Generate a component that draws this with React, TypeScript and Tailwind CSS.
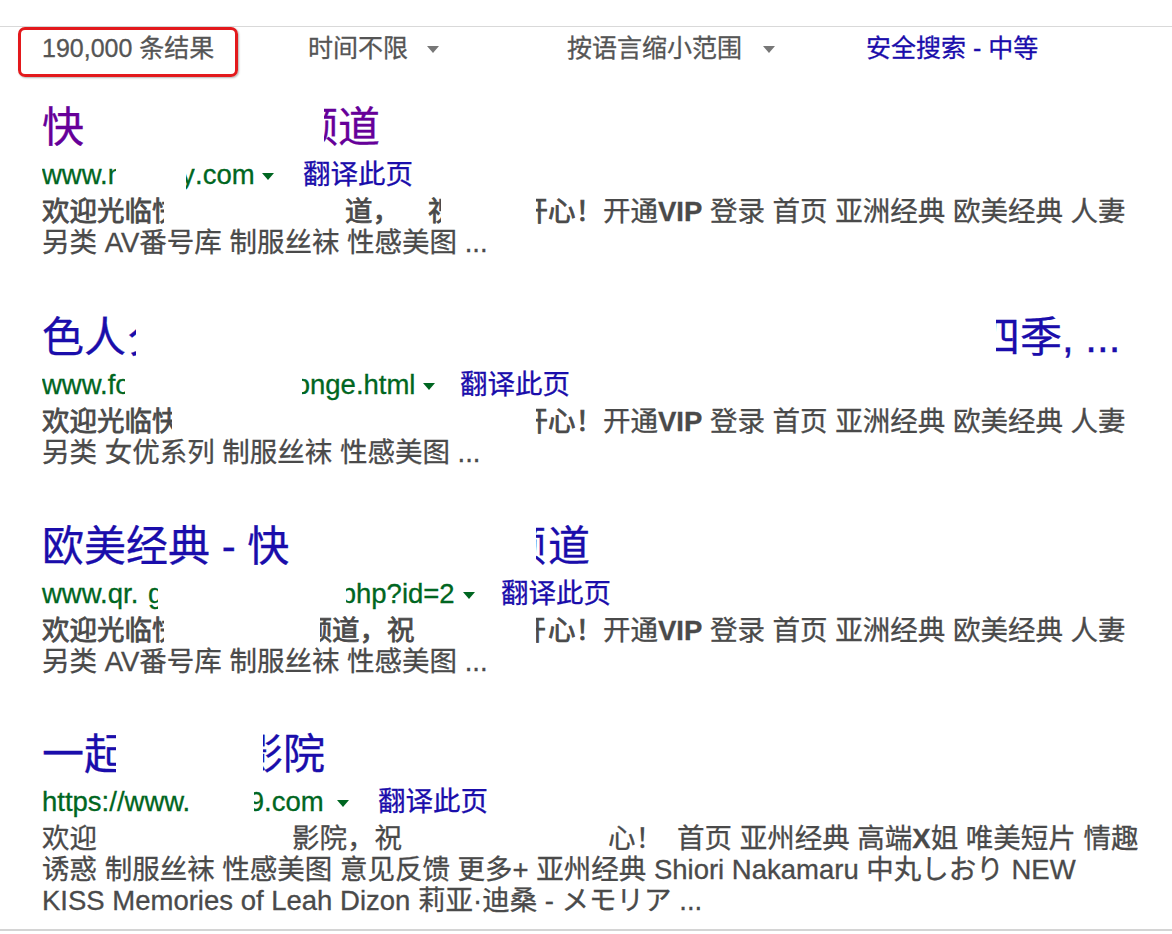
import React from "react";

type Part = {
  x: number;
  t: React.ReactNode;
  cw?: number; // visible width when only part of the glyphs survives the redaction
  shift?: number; // how far the clipped text is pulled left
  b?: boolean;
  c?: string;
};

function Tri({ color = "border-t-[#006621]" }: { color?: string }) {
  return (
    <div className="flex h-full items-center pt-[3px]">
      <div className={`h-0 w-0 border-x-[6px] border-t-[7px] border-x-transparent ${color}`} />
    </div>
  );
}

function Line({ parts, className }: { parts: Part[]; className: string }) {
  return (
    <div className={`flex whitespace-nowrap ${className}`}>
      <div className="shrink-0" style={{ width: parts[0].x }} />
      {parts.map((p, i) => {
        const next = parts[i + 1];
        const slot = next ? next.x - p.x : undefined;
        return (
          <div
            key={i}
            className={`h-full shrink-0 ${p.b ? "[-webkit-text-stroke:0.8px]" : ""} ${p.c ?? ""}`}
            style={slot ? { width: slot } : undefined}
          >
            {p.cw !== undefined ? (
              <div className="overflow-hidden" style={{ width: p.cw }}>
                <div style={{ marginLeft: -(p.shift ?? 0) }}>{p.t}</div>
              </div>
            ) : (
              p.t
            )}
          </div>
        );
      })}
    </div>
  );
}

const blue = "text-[#1a0dab]";

type Result = {
  mt: string;
  titleColor: string;
  title: Part[];
  url: Part[];
  snippet: Part[][];
};

const rest = (
  <>
    开通<b className="font-bold">VIP</b> 登录 首页 亚洲经典 欧美经典 人妻
  </>
);

const results: Result[] = [
  {
    mt: "mt-0",
    titleColor: "text-[#660099]",
    title: [
      { x: 42, t: "快" },
      { x: 324, t: "频", cw: 14, shift: 28 },
      { x: 338, t: "道" },
    ],
    url: [
      { x: 42, t: "www.n", cw: 74 },
      { x: 186, t: "y", cw: 9, shift: 5 },
      { x: 195, t: ".com" },
      { x: 262, t: <Tri /> },
      { x: 303, t: "翻译此页", c: blue },
    ],
    snippet: [
      [
        { x: 42, t: "欢迎光临", b: true },
        { x: 152, t: "快", cw: 12, b: true },
        { x: 345, t: "道，", b: true },
        { x: 428, t: "祝", cw: 13, b: true },
        { x: 536, t: "开", cw: 12, shift: 15.5, b: true },
        { x: 548, t: "心！", b: true },
        { x: 603, t: rest },
      ],
      [{ x: 42, t: "另类 AV番号库 制服丝袜 性感美图 ..." }],
    ],
  },
  {
    mt: "mt-[54px]",
    titleColor: blue,
    title: [
      { x: 42, t: "色人" },
      { x: 126, t: "夕", cw: 10 },
      { x: 996, t: "四", cw: 24, shift: 18 },
      { x: 1020, t: "季, ..." },
    ],
    url: [
      { x: 42, t: "www.fo", cw: 83 },
      { x: 302, t: "o", cw: 8, shift: 7.3 },
      { x: 310, t: "nge.html" },
      { x: 423, t: <Tri /> },
      { x: 460, t: "翻译此页", c: blue },
    ],
    snippet: [
      [
        { x: 42, t: "欢迎光临", b: true },
        { x: 152, t: "快", cw: 20, b: true },
        { x: 536, t: "开", cw: 12, shift: 15.5, b: true },
        { x: 548, t: "心！", b: true },
        { x: 603, t: rest },
      ],
      [{ x: 42, t: "另类 女优系列 制服丝袜 性感美图 ..." }],
    ],
  },
  {
    mt: "mt-[53px]",
    titleColor: blue,
    title: [
      { x: 42, t: "欧美经典 - 快" },
      { x: 536, t: "频", cw: 10, shift: 32 },
      { x: 548, t: "道" },
    ],
    url: [
      { x: 42, t: "www.qr." },
      { x: 148, t: "g", cw: 10 },
      { x: 346, t: "p", cw: 10, shift: 5.3 },
      { x: 356, t: "hp?id=2" },
      { x: 463, t: <Tri /> },
      { x: 501, t: "翻译此页", c: blue },
    ],
    snippet: [
      [
        { x: 42, t: "欢迎光临", b: true },
        { x: 152, t: "快", cw: 12, b: true },
        { x: 320, t: "频", cw: 12, shift: 15.5, b: true },
        { x: 332, t: "道，祝", b: true },
        { x: 536, t: "开", cw: 10, shift: 17.5, b: true },
        { x: 548, t: "心！", b: true },
        { x: 603, t: rest },
      ],
      [{ x: 42, t: "另类 AV番号库 制服丝袜 性感美图 ..." }],
    ],
  },
  {
    mt: "mt-[52px]",
    titleColor: blue,
    title: [
      { x: 42, t: "一" },
      { x: 84, t: "起", cw: 32 },
      { x: 263, t: "影", cw: 20, shift: 22 },
      { x: 283, t: "院" },
    ],
    url: [
      { x: 42, t: "https://www." },
      { x: 254, t: "9", cw: 10, shift: 5.3 },
      { x: 264, t: ".com" },
      { x: 337, t: <Tri /> },
      { x: 378, t: "翻译此页", c: blue },
    ],
    snippet: [
      [
        { x: 42, t: "欢迎" },
        { x: 292, t: "影院，祝" },
        { x: 608, t: "心！" },
        {
          x: 677,
          t: (
            <>
              首页 亚州经典 高端<b className="font-bold">X</b>姐 唯美短片 情趣
            </>
          ),
        },
      ],
      [{ x: 42, t: "诱惑 制服丝袜 性感美图 意见反馈 更多+ 亚州经典 Shiori Nakamaru 中丸しおり NEW" }],
      [{ x: 42, t: "KISS Memories of Leah Dizon 莉亚·迪桑 - メモリア ..." }],
    ],
  },
];

export default function App() {
  return (
    <div className="h-[934px] w-[1172px] overflow-hidden bg-white font-['Liberation_Sans','Noto_Sans_CJK_SC',sans-serif] [-webkit-text-stroke:0.3px]">
      <div className="h-[26px]" />
      <div className="border-t border-[#d9d9d9]" />

      {/* tools row */}
      <div className="flex h-[42px] whitespace-nowrap text-[25px] leading-[42px] text-[#555]">
        <div className="w-[42px] shrink-0" />
        <div className="relative w-[266px] shrink-0">
          190,000 条结果
          <div className="absolute top-0 left-[-24px] h-[50px] w-[220px] rounded-[7px] border-[3px] border-[#e3191c] shadow-[1px_1px_2px_rgba(0,0,0,0.3)]" />
        </div>
        <div className="flex w-[259px] shrink-0">
          <div className="w-[119px]">时间不限</div>
          <Tri color="border-t-[#777]" />
        </div>
        <div className="flex w-[299px] shrink-0">
          <div className="w-[196px]">按语言缩小范围</div>
          <Tri color="border-t-[#777]" />
        </div>
        <div className={blue}>安全搜索 - 中等</div>
      </div>
      <div className="h-[33px]" />

      {results.map((r, i) => (
        <div key={i} className={r.mt}>
          <Line parts={r.title} className={`h-[52px] text-[42px] leading-[52px] ${r.titleColor}`} />
          <Line parts={r.url} className="h-[42px] text-[27.5px] leading-[42px] text-[#006621]" />
          {r.snippet.map((s, j) => (
            <Line key={j} parts={s} className="h-[31px] text-[27.5px] leading-[31px] text-[#4a4a4a]" />
          ))}
        </div>
      ))}

      <div className="mt-[13px] border-t-2 border-[#d4d4d4]" />
    </div>
  );
}
